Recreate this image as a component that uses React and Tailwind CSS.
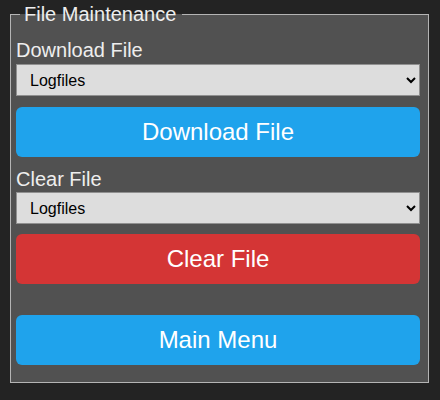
export default function App() {
  return (
    <div className="w-[440px] h-[400px] bg-[#232323] pt-[3px] overflow-hidden" style={{ fontFamily: '"Liberation Sans", Arial, sans-serif' }}>
      <fieldset className="ml-[10px] w-[419px] border border-[#b4b4b4] bg-[#515151] pl-[5px] pr-[8px] pt-[13px] pb-[17px] text-[#eeeeee]">
        <legend className="ml-[4px] pl-[4px] pr-[6px] text-[20px] leading-[23px]">File Maintenance</legend>
        <div className="text-[20px] leading-[23px] mb-[2px]">Download File</div>
        <select className="block w-full h-8 bg-[#dddddd] text-black border border-[#909090] pl-[9px] pr-[4px] text-[16px]">
          <option>Logfiles</option>
        </select>
        <button className="mt-[11px] block w-full h-[50px] rounded-[6px] bg-[#1fa3ec] text-white text-[24px]">Download File</button>
        <div className="mt-[11px] text-[20px] leading-[23px] mb-[1px]">Clear File</div>
        <select className="block w-full h-8 bg-[#dddddd] text-black border border-[#909090] pl-[9px] pr-[4px] text-[16px]">
          <option>Logfiles</option>
        </select>
        <button className="mt-[10px] block w-full h-[50px] rounded-[6px] bg-[#d43535] text-white text-[24px]">Clear File</button>
        <button className="mt-[31px] block w-full h-[50px] rounded-[6px] bg-[#1fa3ec] text-white text-[24px]">Main Menu</button>
      </fieldset>
    </div>
  );
}
